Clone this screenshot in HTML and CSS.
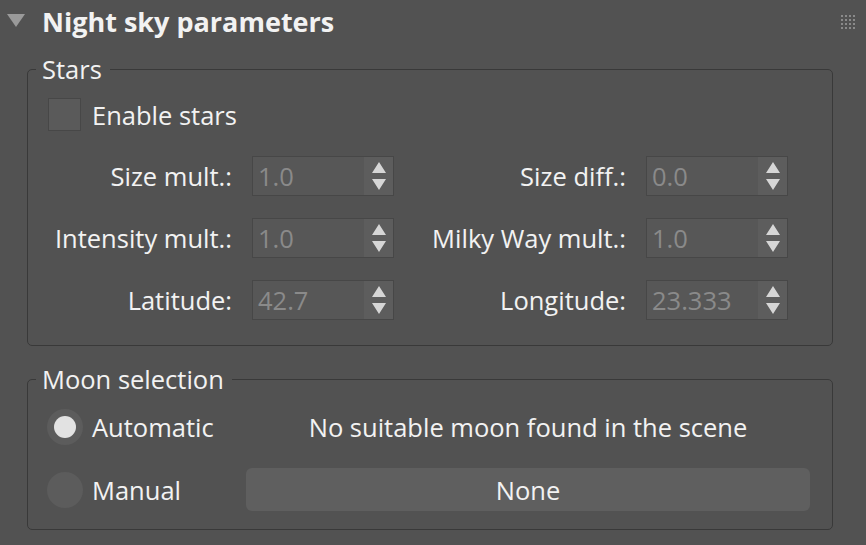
FILE: index.html
```html
<!DOCTYPE html>
<html lang="en">
<head>
    <meta charset="UTF-8">
    <title>Night sky parameters</title>
    <link rel="stylesheet" href="styles.css">
</head>
<body>

    <div class="rollout">
        <div class="rollout-head">
            <svg class="caret" width="18" height="13" viewBox="0 0 18 13"><path d="M0 0H18L9 13Z" fill="#9a9a9a"/></svg>
            <h1>Night sky parameters</h1>
            <svg class="grip" width="14" height="14" viewBox="0 0 14 14" fill="#8a8a8a">
                <rect x="0" y="0" width="2" height="2"/><rect x="4" y="0" width="2" height="2"/><rect x="8" y="0" width="2" height="2"/><rect x="12" y="0" width="2" height="2"/>
                <rect x="0" y="4" width="2" height="2"/><rect x="4" y="4" width="2" height="2"/><rect x="8" y="4" width="2" height="2"/><rect x="12" y="4" width="2" height="2"/>
                <rect x="0" y="8" width="2" height="2"/><rect x="4" y="8" width="2" height="2"/><rect x="8" y="8" width="2" height="2"/><rect x="12" y="8" width="2" height="2"/>
                <rect x="0" y="12" width="2" height="2"/><rect x="4" y="12" width="2" height="2"/><rect x="8" y="12" width="2" height="2"/><rect x="12" y="12" width="2" height="2"/>
            </svg>
        </div>

        <fieldset class="group">
            <legend>Stars</legend>

            <label class="check"><span class="box"></span>Enable stars</label>

            <div class="params">
                <span class="lbl">Size mult.:</span>
                <div class="spinner"><span class="val">1.0</span><span class="arrows"><svg width="29" height="38" viewBox="0 0 29 38"><path d="M8 16L15 5L22 16Z M8 22H22L15 33Z" fill="#d6d6d6"/></svg></span></div>
                <span class="lbl">Size diff.:</span>
                <div class="spinner"><span class="val">0.0</span><span class="arrows"><svg width="29" height="38" viewBox="0 0 29 38"><path d="M8 16L15 5L22 16Z M8 22H22L15 33Z" fill="#d6d6d6"/></svg></span></div>

                <span class="lbl">Intensity mult.:</span>
                <div class="spinner"><span class="val">1.0</span><span class="arrows"><svg width="29" height="38" viewBox="0 0 29 38"><path d="M8 16L15 5L22 16Z M8 22H22L15 33Z" fill="#d6d6d6"/></svg></span></div>
                <span class="lbl">Milky Way mult.:</span>
                <div class="spinner"><span class="val">1.0</span><span class="arrows"><svg width="29" height="38" viewBox="0 0 29 38"><path d="M8 16L15 5L22 16Z M8 22H22L15 33Z" fill="#d6d6d6"/></svg></span></div>

                <span class="lbl">Latitude:</span>
                <div class="spinner"><span class="val">42.7</span><span class="arrows"><svg width="29" height="38" viewBox="0 0 29 38"><path d="M8 16L15 5L22 16Z M8 22H22L15 33Z" fill="#d6d6d6"/></svg></span></div>
                <span class="lbl">Longitude:</span>
                <div class="spinner"><span class="val">23.333</span><span class="arrows"><svg width="29" height="38" viewBox="0 0 29 38"><path d="M8 16L15 5L22 16Z M8 22H22L15 33Z" fill="#d6d6d6"/></svg></span></div>
            </div>
        </fieldset>

        <fieldset class="group moon">
            <legend>Moon selection</legend>

            <div class="moon-grid">
                <label class="radio"><span class="dot checked"></span>Automatic</label>
                <div class="status">No suitable moon found in the scene</div>
                <label class="radio"><span class="dot"></span>Manual</label>
                <button type="button" class="pick">None</button>
            </div>
        </fieldset>
    </div>

</body>
</html>
```

FILE: styles.css
```css
body {
    margin: 0;
    background: #525252;
    color: #f2f2f2;
    font-family: "Open Sans", "Noto Sans", sans-serif;
    font-size: 25.5px;
}
.rollout-head {
    display: flex;
    align-items: center;
    height: 44px;
    padding: 0 11px 0 7px;
}
.caret {
    margin-bottom: 3px;
}
.rollout-head h1 {
    margin: 0 0 0 17px;
    font-size: 27px;
    font-weight: bold;
    line-height: 44px;
}
.grip {
    margin-left: auto;
}
.group {
    margin: 8px 33px 0 27px;
    padding: 12px 21px 25px 20px;
    border: 1px solid #393939;
    border-radius: 5px;
}
.group legend {
    margin-left: -12px;
    padding: 0 8px 0 6px;
    line-height: 34px;
}
.check {
    display: flex;
    align-items: center;
    gap: 11px;
    height: 33px;
}
.box {
    width: 31px;
    height: 31px;
    background: #5a5a5a;
    border: 1px solid #474747;
}
.params {
    display: grid;
    grid-template-columns: 184px 142px 212px 142px;
    grid-auto-rows: 40px;
    column-gap: 20px;
    row-gap: 22px;
    margin-top: 25px;
}
.lbl {
    align-self: center;
    text-align: right;
}
.spinner {
    display: flex;
    background: #575757;
    border: 1px solid #474747;
}
.val {
    flex: 1;
    padding-left: 5px;
    line-height: 38px;
    color: #8a8a8a;
}
.arrows {
    width: 29px;
    background: #5d5d5d;
}
.arrows svg {
    display: block;
}
.moon {
    margin-top: 16px;
    padding-top: 9px;
    padding-bottom: 18px;
}
.moon-grid {
    display: grid;
    grid-template-columns: 198px 564px;
    grid-template-rows: 44px 43px;
    row-gap: 19px;
}
.radio {
    display: flex;
    align-items: center;
    gap: 9px;
}
.dot {
    width: 36px;
    height: 36px;
    margin-left: -1px;
    border-radius: 50%;
    background: #5c5c5c;
    display: flex;
    align-items: center;
    justify-content: center;
}
.dot.checked::after {
    content: "";
    width: 22px;
    height: 22px;
    border-radius: 50%;
    background: #e2e2e2;
}
.status {
    align-self: center;
    text-align: center;
}
.pick {
    font: inherit;
    color: #f2f2f2;
    background: #5f5f5f;
    border: none;
    border-radius: 6px;
    padding: 0;
}
```
